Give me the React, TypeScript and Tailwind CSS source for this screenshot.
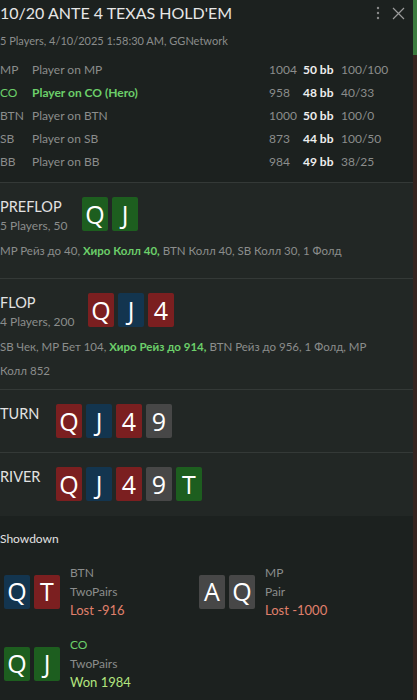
const font = { fontFamily: 'Lato, "Open Sans", sans-serif' };

type Card = { r: string; c: 'g' | 'r' | 'b' | 'k' };

const cardBg: Record<Card['c'], string> = {
  g: 'bg-[#1d5e1f]',
  r: 'bg-[#7b1f20]',
  b: 'bg-[#13354f]',
  k: 'bg-[#474747]',
};

function Cards({ cards }: { cards: Card[] }) {
  return (
    <div className="flex gap-[4px]">
      {cards.map((c, i) => (
        <div
          key={i}
          className={`w-[26px] h-[34px] rounded-[2px] flex items-center justify-center text-white text-[25px] leading-none ${cardBg[c.c]}`}
          style={{ fontFamily: '"Open Sans", sans-serif' }}
        >
          {c.r}
        </div>
      ))}
    </div>
  );
}

const players = [
  { pos: 'MP', name: 'Player on MP', stack: '1004', bb: '50 bb', r: '100/100' },
  { pos: 'CO', name: 'Player on CO (Hero)', stack: '958', bb: '48 bb', r: '40/33', hero: true },
  { pos: 'BTN', name: 'Player on BTN', stack: '1000', bb: '50 bb', r: '100/0' },
  { pos: 'SB', name: 'Player on SB', stack: '873', bb: '44 bb', r: '100/50' },
  { pos: 'BB', name: 'Player on BB', stack: '984', bb: '49 bb', r: '38/25' },
];

const Q: Card = { r: 'Q', c: 'r' };
const J: Card = { r: 'J', c: 'b' };
const F: Card = { r: '4', c: 'r' };
const N: Card = { r: '9', c: 'k' };
const T: Card = { r: 'T', c: 'g' };

function Street({ title, sub, cards, gap, children, pb }: { title: string; sub?: string; cards: Card[]; gap: string; children?: React.ReactNode; pb: string }) {
  return (
    <div className={`bg-[#222725] border-b border-[#343937] pt-[14px] ${pb}`}>
      <div className="flex items-start">
        <div className={gap}>
          <div className="text-[14.5px] leading-[20px] text-[#e2e2e2]">{title}</div>
          {sub && <div className="text-[12px] leading-[16px] text-[#8b8d8c] mt-[1px]">{sub}</div>}
        </div>
        <Cards cards={cards} />
      </div>
      {children}
    </div>
  );
}

function Hand({ cards, pos, hand, res, won, green }: { cards: Card[]; pos: string; hand: string; res: string; won?: boolean; green?: boolean }) {
  return (
    <div className="flex items-center gap-[10px] pl-[4px]">
      <Cards cards={cards} />
      <div className="text-[12px] leading-[19px]">
        <div className={green ? 'text-[#6ccf6a]' : 'text-[#8b8d8c]'}>{pos}</div>
        <div className="text-[#8b8d8c]">{hand}</div>
        <div className={`text-[13px] ${won ? 'text-[#b3e57f]' : 'text-[#e0806c]'}`}>{res}</div>
      </div>
    </div>
  );
}

export default function App() {
  return (
    <div style={font} className="w-[417px] h-[700px] overflow-hidden flex bg-[#1c211f]">
      <div className="w-[413px] flex flex-col">
        <div className="pb-[9px]">
          <div className="flex items-start justify-between pt-[3px]">
            <div className="text-[16px] leading-[20px] text-[#e6e6e6]">10/20 ANTE 4 TEXAS HOLD'EM</div>
            <div className="flex items-center gap-[12px] pr-[8px] pt-[3px]">
              <svg width="4" height="14" viewBox="0 0 4 14" fill="#8a8a8a">
                <circle cx="2" cy="2" r="1.2" />
                <circle cx="2" cy="7" r="1.2" />
                <circle cx="2" cy="12" r="1.2" />
              </svg>
              <svg width="13" height="13" viewBox="0 0 13 13" stroke="#9a9a9a" strokeWidth="1.2">
                <path d="M1 1L12 12M12 1L1 12" />
              </svg>
            </div>
          </div>
          <div className="text-[11px] leading-[16px] text-[#8b8d8c] mt-[10px]">5 Players, 4/10/2025 1:58:30 AM, GGNetwork</div>
          <div className="mt-[9px] flex flex-col">
            {players.map((p) => (
              <div key={p.pos} className="flex h-[23px] items-center text-[12px]">
                <div className={`w-[32px] ${p.hero ? 'text-[#6ccf6a]' : 'text-[#8b8d8c]'}`}>{p.pos}</div>
                <div className={`flex-1 ${p.hero ? 'text-[#6ccf6a] font-bold' : 'text-[#8b8d8c]'}`}>{p.name}</div>
                <div className="w-[34px] text-[#8b8d8c]">{p.stack}</div>
                <div className="w-[38px] text-[#eeeeee] font-bold">{p.bb}</div>
                <div className="w-[72px] text-[#8b8d8c]">{p.r}</div>
              </div>
            ))}
          </div>
        </div>
        <div className="border-t border-[#343937]">
          <Street title="PREFLOP" sub="5 Players, 50" cards={[{ r: 'Q', c: 'g' }, { r: 'J', c: 'g' }]} gap="w-[82px]" pb="pb-[15px]">
            <div className="text-[11.5px] leading-[24px] text-[#8b8d8c] mt-[5px]">
              MP Рейз до 40, <span className="text-[#6ccf6a] font-bold">Хиро Колл 40,</span> BTN Колл 40, SB Колл 30, 1 Фолд
            </div>
          </Street>
          <Street title="FLOP" sub="4 Players, 200" cards={[Q, J, F]} gap="w-[88px]" pb="pb-[6px]">
            <div className="text-[11.5px] leading-[24px] text-[#8b8d8c] mt-[5px] pr-[40px]">
              SB Чек, MP Бет 104, <span className="text-[#6ccf6a] font-bold">Хиро Рейз до 914,</span> BTN Рейз до 956, 1 Фолд, MP Колл 852
            </div>
          </Street>
          <Street title="TURN" cards={[Q, J, F, N]} gap="w-[56px]" pb="pb-[14px]" />
          <div className="bg-[#222725] pt-[14px] pb-[15px]">
            <div className="flex items-start">
              <div className="w-[56px] text-[14.5px] leading-[20px] text-[#e2e2e2]">RIVER</div>
              <Cards cards={[Q, J, F, N, T]} />
            </div>
          </div>
        </div>
        <div className="pt-[13px]">
          <div className="text-[12px] leading-[20px] text-[#e2e2e2]">Showdown</div>
          <div className="grid grid-cols-[195px_1fr] mt-[14px] gap-y-[15px]">
            <Hand cards={[{ r: 'Q', c: 'b' }, { r: 'T', c: 'r' }]} pos="BTN" hand="TwoPairs" res="Lost -916" />
            <Hand cards={[{ r: 'A', c: 'k' }, { r: 'Q', c: 'k' }]} pos="MP" hand="Pair" res="Lost -1000" />
            <Hand cards={[{ r: 'Q', c: 'g' }, { r: 'J', c: 'g' }]} pos="CO" hand="TwoPairs" res="Won 1984" won green />
          </div>
        </div>
      </div>
      <div className="w-[4px] flex flex-col">
        <div className="h-[55px] bg-[#3b7a3e]" />
        <div className="flex-1 bg-[#35241f]" />
      </div>
    </div>
  );
}
